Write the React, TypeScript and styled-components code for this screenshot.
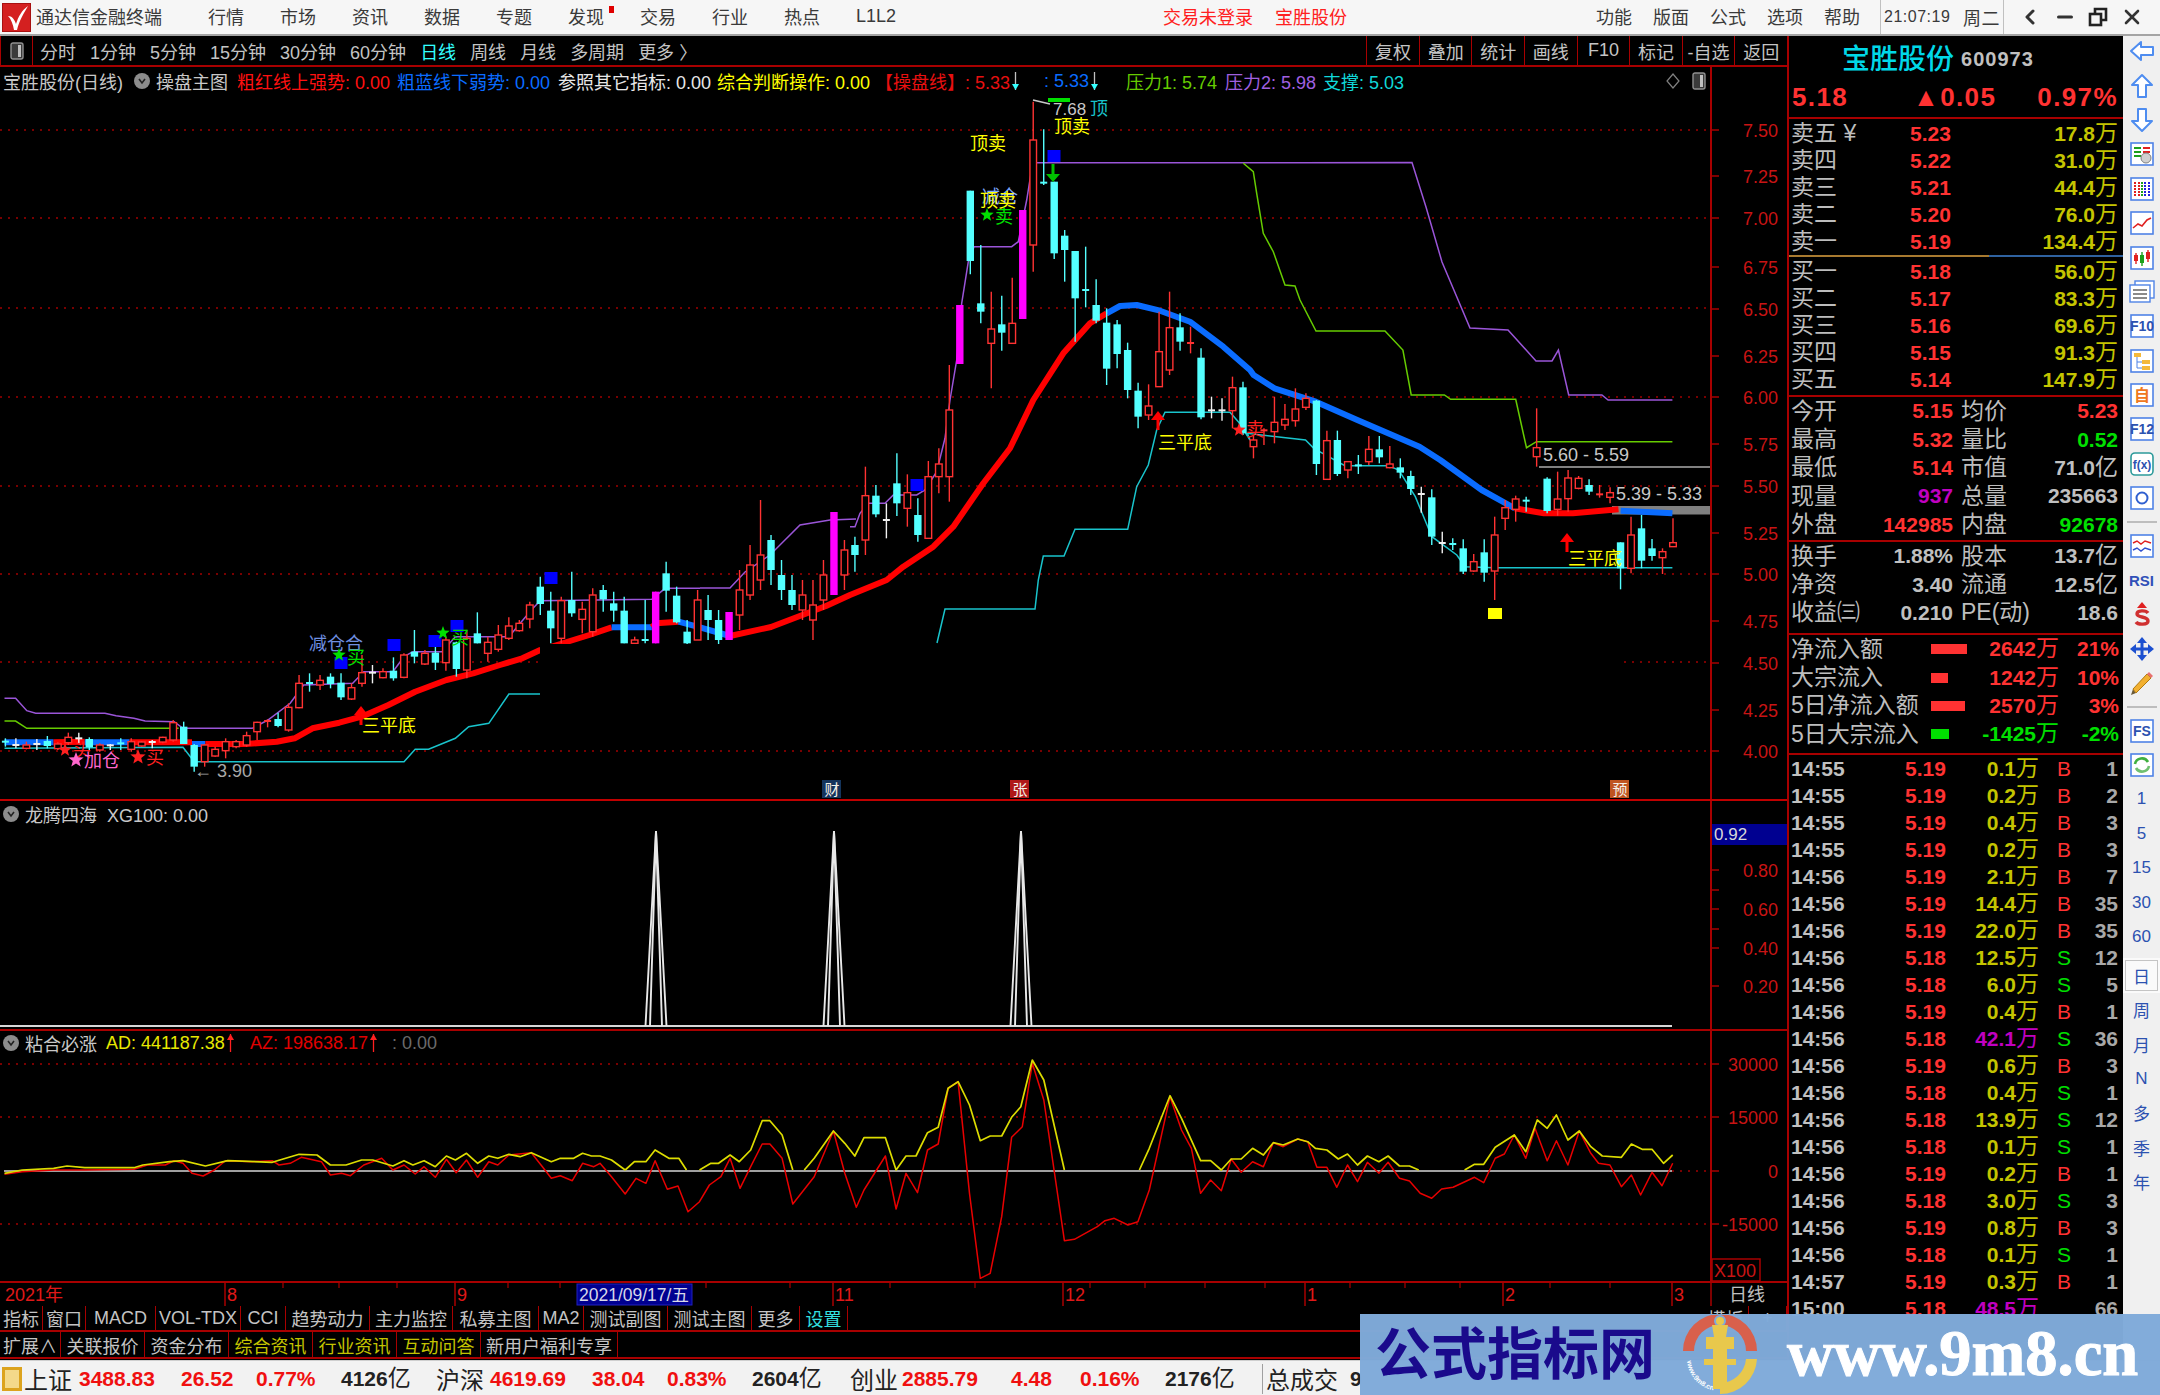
import React from 'react';
import styled, { createGlobalStyle } from 'styled-components';
import { ChevronLeft, Minus, X } from 'lucide-react';

const GlobalStyle = createGlobalStyle`
  html, body { margin: 0; padding: 0; background: #000; overflow: hidden; }
  body { font-family: "Liberation Sans", "Noto Sans CJK SC", sans-serif; }
  #root { width: 2160px; height: 1395px; }
`;

const RED_LINE = '#a80000';

const Page = styled.div`
  position: relative;
  width: 2160px;
  height: 1395px;
  display: flex;
  flex-direction: column;
  overflow: hidden;
  background: #000;
`;

/* ---------- title bar ---------- */
const TitleBar = styled.header`
  height: 34px;
  flex: none;
  display: flex;
  align-items: center;
  background: #f6f6f6;
  border-bottom: 2px solid #a4a4a4;
  color: #3a3a3a;
  font-size: 18px;
`;
const AppName = styled.span`margin-left: 5px; width: 126px; white-space: nowrap; padding-bottom: 2px;`;
const MenuGroup = styled.nav<{ $ml: number; $gap: number }>`
  display: flex;
  align-items: center;
  gap: ${p => p.$gap}px;
  margin-left: ${p => p.$ml}px;
  padding-bottom: 2px;
`;
const MenuItem = styled.span<{ $c?: string; $dot?: boolean }>`
  position: relative;
  color: ${p => p.$c || '#3a3a3a'};
  white-space: nowrap;
  ${p => p.$dot ? `&::after{content:"";position:absolute;right:-10px;top:3px;width:5px;height:7px;background:#e00000;}` : ''}
`;
const Clock = styled.div`
  margin-left: 20px;
  width: 124px;
  height: 34px;
  display: flex;
  align-items: center;
  justify-content: space-between;
  padding: 0 3px;
  box-sizing: border-box;
  border-left: 1px solid #c0c0c0;
  border-right: 1px solid #c0c0c0;
  font-size: 16px;
  letter-spacing: 0.5px;
`;
const WinButtons = styled.div`
  margin-left: 14px;
  display: flex;
  align-items: center;
  gap: 12px;
  color: #333;
`;

/* ---------- body ---------- */
const Body = styled.div`
  flex: none;
  height: 1324px;
  display: flex;
`;
const ChartColumn = styled.main`
  width: 1787px;
  flex: none;
  display: flex;
  flex-direction: column;
`;
const Toolbar = styled.div`
  height: 29px;
  flex: none;
  display: flex;
  align-items: stretch;
  justify-content: space-between;
  border-bottom: 2px solid ${RED_LINE};
  color: #c4c4c4;
  font-size: 18px;
`;
const Toggle = styled.div`
  width: 33px;
  display: flex;
  align-items: center;
  justify-content: center;
  border-right: 1px solid ${RED_LINE};
  border-left: 1px solid ${RED_LINE};
  box-sizing: border-box;
`;
const PeriodGroup = styled.div`
  display: flex;
  align-items: center;
  gap: 14px;
  margin-left: 7px;
  flex: 1;
`;
const Period = styled.span<{ $on?: boolean }>`
  color: ${p => p.$on ? '#33ffff' : '#c4c4c4'};
  white-space: nowrap;
`;
const ToolButton = styled.span`
  width: 52.6px;
  display: flex;
  align-items: center;
  justify-content: center;
  border-left: 1px solid ${RED_LINE};
  box-sizing: border-box;
  white-space: nowrap;
`;
const Pane = styled.section<{ $h: number }>`
  position: relative;
  height: ${p => p.$h}px;
  flex: none;
`;
const ChartSvg = styled.svg`
  display: block;
  position: absolute;
  left: 0;
  top: 0;
`;
const Legend = styled.div<{ $top: number }>`
  position: absolute;
  z-index: 2;
  left: 3px;
  top: ${p => p.$top}px;
  width: 1703px;
  height: 24px;
  display: flex;
  align-items: center;
  font-size: 18px;
  color: #c8c8c8;
  white-space: nowrap;
`;
const LegendItem = styled.span<{ $c?: string; $w?: number; $ml?: number }>`
  color: ${p => p.$c || '#c8c8c8'};
  ${p => p.$w ? `width:${p.$w}px;flex:none;` : ''}
  ${p => p.$ml ? `margin-left:${p.$ml}px;` : ''}
  display: inline-flex;
  align-items: center;
`;
const RoundMark = styled.span`
  width: 16px;
  height: 16px;
  margin-right: 6px;
  border-radius: 50%;
  background: #8c8c8c;
  flex: none;
  display: inline-flex;
  align-items: center;
  justify-content: center;
`;
const LegendTail = styled.span`
  margin-left: auto;
  display: inline-flex;
  align-items: center;
  gap: 12px;
`;
const AxisBar = styled.div`
  height: 23px;
  flex: none;
  position: relative;
`;
const TabRow = styled.div<{ $h: number }>`
  height: ${p => p.$h}px;
  flex: none;
  display: flex;
  border-bottom: 2px solid ${RED_LINE};
  box-sizing: border-box;
  font-size: 18px;
`;
const Tab = styled.span<{ $w: number; $c?: string }>`
  width: ${p => p.$w}px;
  flex: none;
  display: flex;
  align-items: center;
  justify-content: center;
  border-right: 1.5px solid ${RED_LINE};
  box-sizing: border-box;
  white-space: nowrap;
  overflow: hidden;
  color: ${p => p.$c || '#c4c4c4'};
`;
const TabSpacer = styled.span`flex: 1;`;

/* ---------- quote panel ---------- */
const QuotePanel = styled.aside`
  width: 336px;
  flex: none;
  box-sizing: border-box;
  border-left: 2px solid ${RED_LINE};
  display: flex;
  flex-direction: column;
  color: #c0c0c0;
  overflow: hidden;
`;
const Section = styled.div<{ $h: number; $rule?: boolean; $pt?: number }>`
  height: ${p => p.$h}px;
  flex: none;
  box-sizing: border-box;
  overflow: hidden;
  ${p => p.$pt ? `padding-top:${p.$pt}px;` : ''}
  ${p => p.$rule ? `border-bottom: 2px solid ${RED_LINE};` : ''}
`;
const NameRow = styled.div`
  height: 42px;
  padding-left: 53px;
  display: flex;
  align-items: center;
  gap: 7px;
`;
const StockName = styled.span`
  color: #00d8e8;
  font-size: 28px;
  font-weight: 500;
  white-space: nowrap;
`;
const StockCode = styled.span`
  color: #c0c0c0;
  font-size: 20px;
  font-weight: 700;
  letter-spacing: 1px;
  margin-top: 4px;
`;
const PriceRow = styled.div`
  height: 39px;
  display: grid;
  grid-template-columns: 121px 123px 1fr;
  padding: 0 5px 0 3px;
  align-items: center;
  font-weight: 700;
  font-size: 26px;
  letter-spacing: 1.4px;
  color: #ff3232;
`;
const RightText = styled.span`text-align: right;`;
const OrderRowBox = styled.div`
  height: 27.1px;
  display: grid;
  grid-template-columns: 119px 60px 1fr;
  padding: 0 5px 0 2px;
  align-items: center;
`;
const Label = styled.span`
  font-size: 23px;
  color: #bdbdbd;
  white-space: nowrap;
  line-height: 1;
  letter-spacing: 0;
`;
const Num = styled.span<{ $c?: string; $right?: boolean }>`
  font-size: 21px;
  font-weight: 700;
  color: ${p => p.$c || '#ff3232'};
  white-space: nowrap;
  ${p => p.$right ? 'text-align:right;' : ''}
`;
const Unit = styled.span`
  font-size: 23px;
  font-weight: 400;
  line-height: 1;
`;
const SplitRule = styled.div`
  height: 2px;
  flex: none;
  margin: 0 0 1px;
  background: linear-gradient(to right, #a87a30 0 200px, #2f62a0 200px);
`;
const StatRow = styled.div`
  height: 28.4px;
  display: grid;
  grid-template-columns: 2px 162px 8px 47px 1fr;
  padding-right: 5px;
  align-items: center;
`;
const FlowRow = styled.div`
  height: 28.4px;
  position: relative;
  display: grid;
  grid-template-columns: 140px 128px 1fr;
  padding: 0 4px 0 2px;
  align-items: center;
`;
const FlowBarCell = styled.span`
  display: flex;
  align-items: center;
`;
const FlowBar = styled.i<{ $c: string; $w: number }>`
  display: block;
  height: 10px;
  width: ${p => p.$w}px;
  background: ${p => p.$c};
`;
const TickRow = styled.div`
  height: 27px;
  display: grid;
  grid-template-columns: 114px 41px 93px 18px 1fr;
  padding: 0 5px 0 2px;
  align-items: center;
`;
const TickSide = styled.span<{ $c: string }>`
  padding-left: 18px;
  font-size: 21px;
  color: ${p => p.$c};
  grid-column: 4;
  white-space: nowrap;
`;

/* ---------- side rail ---------- */
const Rail = styled.aside`
  flex: 1;
  background: #f0f0f0;
  display: flex;
  flex-direction: column;
  align-items: center;
  overflow: hidden;
`;
const RailButton = styled.div<{ $on?: boolean }>`
  height: 34.4px;
  flex: none;
  width: 100%;
  display: flex;
  align-items: center;
  justify-content: center;
  box-sizing: border-box;
  color: #2c52b0;
  font-size: 17px;
  &:first-child { margin-top: -2px; }
  ${p => p.$on ? 'background:#fafafa;outline:1px solid #c4c4c4;outline-offset:-3px;' : ''}
`;
const RailRule = styled.div`
  height: 2px;
  width: 30px;
  flex: none;
  margin: 5.5px 0;
  background: #bdbdbd;
`;
const RailGap = styled.div`height: 4px; flex: none;`;

/* ---------- status bar ---------- */
const StatusBar = styled.footer`
  flex: 1;
  display: flex;
  align-items: center;
  background: #f2f2f2;
  border-top: 1px solid #cfcfcf;
  color: #222;
  white-space: nowrap;
`;
const StatusCell = styled.span<{ $w: number; $c?: string; $big?: boolean; $bold?: boolean }>`
  width: ${p => p.$w}px;
  flex: none;
  color: ${p => p.$c || '#222'};
  font-size: ${p => p.$big ? 24 : 21}px;
  font-weight: ${p => p.$bold ? 700 : 400};
  white-space: nowrap;
`;
const StatusLogo = styled.span`
  width: 20px;
  height: 24px;
  margin: 0 2px 0 2px;
  flex: none;
  box-sizing: border-box;
  border: 3px solid #dca31e;
  background: #f4d98a;
`;
const StatusSplit = styled.span`
  width: 1px;
  height: 30px;
  background: #a0a0a0;
  margin: 0 3px 0 0;
  flex: none;
`;

/* ---------- watermark ---------- */
const Watermark = styled.aside`
  position: absolute;
  right: 0;
  bottom: 0;
  width: 800px;
  height: 81px;
  display: flex;
  align-items: center;
  background: rgba(127, 170, 217, 0.98);
  z-index: 5;
`;
const WmTitle = styled.span`
  margin-left: 15px;
  width: 285px;
  color: #1a0a8c;
  font-size: 56px;
  font-weight: 700;
  white-space: nowrap;
  line-height: 1;
`;
const WmSite = styled.span`
  margin-left: 27px;
  color: #fff;
  font-family: "Liberation Serif", serif;
  font-weight: 700;
  font-size: 64.5px;
  line-height: 1;
  white-space: nowrap;
  -webkit-text-stroke: 1px #fff;
`;

/* ---------- svg text ---------- */
const Mark = styled.text<{ $c: string; $s?: number; $bold?: boolean }>`
  fill: ${p => p.$c};
  font-size: ${p => p.$s || 18}px;
  font-weight: ${p => p.$bold ? 700 : 400};
`;

/* ---------- chart data helpers ---------- */
type Conv = [number, number, number];
const Z8: Conv = [0, 2.24, 540];
const Z7: Conv = [850, 3, 80];
const Z9: Conv = [1150, 2.412, 350];
const Z12: Conv = [0, 2.24, 1030];
const Z10: Conv = [600, 1.307, 1030];
const pts = (a: number[], c: Conv) => {
  const out: string[] = [];
  for (let i = 0; i < a.length; i += 2) out.push(`${(c[0] + a[i] / c[1]).toFixed(1)},${(c[2] + a[i + 1] / 3).toFixed(1)}`);
  return out.join(' ');
};
const join = (...p: string[]) => p.join(' ');

type C = [string, number, number, number, number];
const S8: C[] = [
  ['c',595,605,610,620],['w',595,615,616,625],['r',605,615,625,628],['w',597,612,613,630],['c',588,603,618,625],['r',607,612,626,630],['r',578,592,608,615],['w',578,595,596,610],['c',592,597,622,630],['r',610,615,630,635],['w',612,616,617,630],['c',595,610,611,630],['r',595,605,628,635],['r',603,606,618,620],['w',600,606,607,625],['r',590,592,606,610],['r',540,548,600,605],['c',545,560,612,612],['c',612,615,680,695],['r',612,615,665,680],['r',620,628,648,650],['r',595,605,632,655],['r',600,605,620,625],['r',575,587,615,620],['r',545,547,575,600],['r',538,543,548,562],['c',518,537,558,562],['r',490,502,570,575],['r',405,430,503,505],['c',400,429,435,455],['r',405,421,435,450],['c',400,410,432,445],['c',400,428,472,480],['r',430,443,477,480],['r',345,398,430,440],['w',375,398,399,430],['r',385,395,413,415],['c',352,392,415,422],['r',340,345,412,415],['c',270,335,350,370],['r',330,340,372,375],['c',305,338,368,390],['r',290,300,368,392],['c',305,307,387,410],['r',270,295,390,415],['c',217,280,310,310],['r',290,307,340,365],['r',255,285,328,335],['r',232,258,295,300],['r',240,250,272,275],['r',185,195,237,265],['c',110,140,192,225],['c',155,212,265,310],['r',170,182,295,310],['c',95,180,220,230],['r',185,208,238,280],['r',145,165,275,290],['c',135,150,178,215],['c',155,190,212,245],['c',170,212,310,310],['r',290,300,310,310],['c',180,300,301,310],['m',155,155,310,310],['c',65,100,152,215],['c',140,167,247,250],['c',240,275,310,320],
];
const S2: C[] = [
  ['r',590,600,640,640],['c',595,610,620,640],['c',610,620,640,645],['m',612,612,640,640],['r',570,590,615,630],['r',545,565,595,600],['r',500,555,580,590],['c',535,540,570,585],['c',560,575,590,600],['c',575,590,605,610],['r',580,595,610,620],['r',580,605,620,640],['r',560,575,600,610],['m',512,512,595,595],['r',540,550,575,590],
];
const S7: C[] = [
  ['c',1370,1395,1425,1475],['r',1160,1247,1380,1425],['c',1215,1247,1303,1312],['w',1270,1320,1321,1375],['c',1120,1210,1270,1308],['r',1183,1238,1285,1340],['c',1255,1305,1365,1385],['r',1143,1190,1375,1375],['r',1105,1152,1190,1240],['r',855,990,1190,1265],['m',675,675,852,852],['c',332,332,543,583],['c',495,670,695,730],['r',635,747,790,925],['c',647,733,758,812],['r',593,730,790,790],['m',390,390,717,717],['r',65,180,495,575],['c',148,308,313,315],['c',305,305,520,537],['c',450,467,510,605],['c',513,513,655,785],['c',500,630,634,682],['c',598,675,722,730],['c',685,728,866,915],['c',720,733,822,865],['c',788,810,930,955],['c',908,932,1010,1045],['r',913,978,1005,1020],['r',695,815,920,920],['r',635,743,870,885],['c',700,742,785,812],['r',740,789,791,820],['c',805,833,1012,1018],['w',950,991,993,1015],['w',955,991,993,1022],['r',890,923,992,1045],['c',905,922,1060,1065],['r',1065,1080,1100,1135],['r',1045,1051,1053,1095],['r',950,1027,1055,1090],['r',972,1018,1035,1050],['r',925,987,1022,1040],
];
const S9: C[] = [
  ['r',130,145,172,180],['c',150,152,342,375],['r',242,272,388,388],['c',242,270,372,378],['r',335,335,360,385],['c',315,346,348,372],['r',258,298,335,345],['c',258,298,322,340],['r',288,342,353,355],['c',325,352,368,385],['c',362,378,417,435],['w',410,432,434,488],['c',418,442,560,585],['w',545,579,581,610],['c',565,582,584,600],['c',568,595,665,672],['r',612,635,663,665],['c',568,607,668,695],['r',500,555,663,750],['r',450,473,505,540],['r',437,447,478,515],['c',440,452,454,485],['r',175,293,320,350],['c',382,386,483,490],['r',365,447,478,497],['r',360,384,446,485],['r',378,385,415,418],['c',388,405,425,435],['r',405,433,441,443],['r',412,428,442,460],['c',577,577,655,718],['r',500,555,655,670],['c',495,535,632,655],['c',567,595,618,632],['r',595,605,623,672],['r',505,578,590,590],
];
const toY = (rows: C[], f: (z: number) => number): C[] => rows.map(r => [r[0], f(r[1]), f(r[2]), f(r[3]), f(r[4])]);
const CANDLES: C[] = [
  ...toY(S8, z => 540 + z / 3),
  ...S2,
  ...toY(S7, z => 80 + z / 3),
  ...toY(S9, z => 350 + z / 3),
];
const CC: Record<string, string> = { r: '#ff3232', c: '#54ffff', w: '#f0f0f0', m: '#ff00ff' };

const Candles = () => (
  <g>
    {CANDLES.map((d, i) => {
      const x = 5.4 + 10.488 * i;
      const col = CC[d[0]];
      const flat = d[3] - d[2] < 3;
      return (
        <g key={i}>
          <line x1={x} x2={x} y1={d[1]} y2={d[4]} stroke={col} strokeWidth={1.4} />
          {flat ? (
            <line x1={x - 3.5} x2={x + 3.5} y1={d[2]} y2={d[2]} stroke={col} strokeWidth={2} />
          ) : d[0] === 'r' ? (
            <rect x={x - 3.3} y={d[2]} width={6.6} height={d[3] - d[2]} fill="#000" stroke={col} strokeWidth={1.4} />
          ) : (
            <rect x={x - 3.7} y={d[2]} width={7.4} height={d[3] - d[2]} fill={col} />
          )}
        </g>
      );
    })}
  </g>
);

const PURPLE_LEFT = pts([10,475,35,475,60,512,80,520,235,520,260,527,300,535,325,543,390,545,410,565,565,565,600,540,650,490,680,435,790,430,815,395,880,395,905,350,925,335,990,335,1020,290,1140,290,1190,210,1210,182,1460,178,1490,145,1568,145], Z8);
const PURPLE_MID = '700,588 730,588 745,572 770,555 800,525 830,520 856,519';
const PURPLE_RIGHT = join(
  pts([0,1340,15,1340,30,1300,55,1270,105,1270,130,1245,200,1245,225,1230,260,1175,285,1075,300,960,320,840,335,670,355,545,372,500,485,500,505,485,530,360,548,248,1350,248], Z7),
  '1412,162.5 1426,207 1442,262 1470,328 1508,330 1536,361 1552,361',
  pts([985,0,1010,135,1090,135,1105,150,1260,150], Z9)
);
const GREEN_LEFT = pts([10,543,35,543,60,565,400,565], Z8);
const GREEN_RIGHT = join(
  pts([1180,250,1210,275,1220,340,1240,460,1270,515,1305,615,1335,618,1350,660], Z7),
  '1316,331 1385,331',
  pts([610,0,630,135,710,135,725,148,882,148,908,293,932,275,1260,275], Z9)
);
const CYAN_LEFT = pts([10,625,410,622,435,665,905,665,930,628,960,628,1020,595,1050,560,1095,550,1140,462,1210,462], Z8);
const CYAN_RIGHT = join(
  '937,643 945,609 1035,609',
  pts([565,1500,580,1428,642,1428,675,1348,833,1348,860,1220,895,1155,920,1050,945,997,1140,997,1165,1025,1200,1080], Z7),
  pts([235,250,375,270,395,295,470,347,575,347,600,360,640,440,680,560,740,615,760,650,830,653,1260,653], Z9)
);

const THICK: [string, string][] = [
  ['#0a6cff', pts([10,607,120,607], Z8)],
  ['#ff0000', pts([120,607,190,605], Z8)],
  ['#0a6cff', pts([190,607,290,607], Z8)],
  ['#ff0000', pts([290,607,430,607], Z8)],
  ['#0a6cff', pts([430,612,460,612], Z8)],
  ['#ff0000', pts([460,612,550,612,620,605,660,595,700,565,760,548,810,530,870,495,930,455,1000,420,1060,400,1120,375,1170,355,1210,330,1255,312,1320,285,1370,262], Z8)],
  ['#0a6cff', pts([1370,262,1460,262], Z8)],
  ['#ff0000', pts([1460,262,1470,250,1520,245], Z8)],
  ['#0a6cff', join(pts([1520,245,1568,262], Z8), '730,636')],
  ['#ff0000', join('730,636 771,627 826,606 850,595', pts([110,1500,160,1460,250,1400,310,1340,400,1210,480,1105,550,960,640,820,720,730,770,700], Z7))],
  ['#0a6cff', join(pts([770,700,810,678,860,675,930,692,1020,725,1120,800,1200,870], Z7), pts([250,75,300,115,400,155,500,210,650,290,700,330,800,420,880,475], Z9))],
  ['#ff0000', pts([880,475,950,490,1020,490,1130,478], Z9)],
  ['#0a6cff', pts([1135,482,1260,490], Z9)],
];

const Y12 = pts([10,430,50,420,120,415,150,408,190,413,300,413,320,405,380,395,410,392,460,408,510,392,610,397,670,373,710,375,740,405,775,405,810,390,835,390,880,408,905,392,925,405,950,392,975,410,1000,378,1020,390,1045,370,1070,400,1095,378,1115,385,1140,373,1165,380,1190,368,1235,395,1255,385,1285,385,1305,370,1325,378], Z12);
const YELLOW = [
  join(Y12, pts([0,378,15,390,33,420], Z10)),
  pts([33,420,45,395,60,395,72,360,90,385,103,385,113,420], Z10),
  pts([130,420,145,400,155,400,170,375,182,395,197,360,212,272,222,272,238,315,252,420], Z10),
  pts([267,420,280,385,305,303,320,340,333,378,345,323,373,323,387,420,400,378,413,378,428,308,442,292,455,175,468,155,483,225,497,332,510,318,525,318,538,262,550,230,565,90,580,150,607,420], Z10),
  pts([705,420,718,355,745,197,760,265,785,392,798,392,812,420,825,387,838,387,853,355,867,375,880,338,893,345,912,327,925,335,935,355,950,360,965,387,977,372,990,405,1003,378,1018,395,1030,378,1045,408,1058,408,1070,420], Z10),
  pts([1130,420,1143,403,1155,403,1170,352,1195,315,1210,365,1225,270,1238,295,1250,255,1265,330,1280,303,1295,350,1310,378,1335,382,1348,342,1362,358,1375,358,1390,400,1402,375], Z10),
];
const REDSUB = join(
  pts([10,433,50,425,120,420,190,420,300,418,330,405,370,405,390,392,410,400,430,430,455,438,480,420,505,392,565,395,610,392,625,405,650,400,675,382,720,395,740,435,765,430,785,437,815,405,855,385,880,420,905,405,930,432,950,410,975,442,1000,388,1022,428,1045,390,1070,442,1095,395,1115,405,1140,375,1190,368,1215,410,1235,445,1255,437,1282,452,1305,400,1330,410], Z12),
  pts([0,400,15,440,33,492,47,445,60,460,72,392,88,478,102,468,115,545,130,515,143,465,158,440,170,385,183,475,197,410,212,342,222,342,238,385,252,522,280,440,305,303,320,430,335,532,345,480,373,378,387,537,400,430,415,488,428,360,442,342,455,175,468,155,483,490,497,745,510,730,525,560,538,322,552,290,565,100,580,210,607,632,620,628,650,590,660,572,672,565,690,585,703,575,718,480,745,200,760,300,773,355,785,490,798,450,812,482,825,387,838,427,853,395,867,410,880,338,893,350,912,327,925,335,937,412,950,412,963,472,977,405,990,455,1003,397,1018,430,1030,397,1045,445,1058,453,1072,490,1087,505,1100,477,1115,472,1143,442,1155,458,1170,385,1182,372,1195,315,1210,385,1222,295,1238,392,1250,332,1265,405,1280,303,1295,370,1305,400,1320,405,1335,470,1348,435,1360,495,1375,427,1388,467,1402,400], Z10)
);

const Dots = ({ y, x1 = 0, x2 = 1711 }: { y: number; x1?: number; x2?: number }) => (
  <line x1={x1} x2={x2} y1={y} y2={y} stroke="#a00000" strokeWidth={1.5} strokeDasharray="2 6" />
);
const AxisLabel = ({ y, t }: { y: number; t: string }) => (
  <Mark $c="#c81414" $s={18} x={1778} y={y + 6.5} textAnchor="end">{t}</Mark>
);
const Star = ({ x, y, c, r = 7 }: { x: number; y: number; c: string; r?: number }) => {
  const p: string[] = [];
  for (let i = 0; i < 10; i++) {
    const a = -Math.PI / 2 + (i * Math.PI) / 5;
    const q = i % 2 ? r * 0.42 : r;
    p.push(`${(x + q * Math.cos(a)).toFixed(1)},${(y + q * Math.sin(a)).toFixed(1)}`);
  }
  return <polygon points={p.join(' ')} fill={c} />;
};
const UpArrow = ({ x, y }: { x: number; y: number }) => (
  <g fill="#ff0000">
    <polygon points={`${x},${y} ${x - 7},${y + 9} ${x + 7},${y + 9}`} />
    <rect x={x - 1.5} y={y + 9} width={3} height={10} />
  </g>
);
const Square = ({ x, y }: { x: number; y: number }) => <rect x={x - 6.5} y={y - 6} width={13} height={12} fill="#0000ff" />;
const Badge = ({ x, bg, t }: { x: number; bg: string; t: string }) => (
  <g>
    <rect x={x - 10} y={780} width={19} height={18} fill={bg} />
    <Mark $c="#f4f0e8" $s={15} x={x} y={795} textAnchor="middle">{t}</Mark>
  </g>
);

const MainChart = () => (
  <ChartSvg width={1787} height={734} viewBox="0 67 1787 734">
    {[130, 218, 308, 397, 486, 574, 751].map(y => <Dots key={y} y={y} />)}
    <Dots y={662} />
    <line x1={1711} x2={1711} y1={67} y2={800} stroke={RED_LINE} strokeWidth={2} />
    {[['7.50',130],['7.25',176],['7.00',218],['6.75',267],['6.50',309],['6.25',356],['6.00',397],['5.75',444],['5.50',486],['5.25',533],['5.00',574],['4.75',621],['4.50',663],['4.25',710],['4.00',751]].map(([t, y]) => (
      <g key={t as string}>
        <line x1={1711} x2={1719} y1={y as number} y2={y as number} stroke={RED_LINE} strokeWidth={1.5} />
        <AxisLabel y={y as number} t={t as string} />
      </g>
    ))}
    <g fill="none" strokeWidth={1.5}>
      <polyline points={PURPLE_LEFT} stroke="#9a55d8" />
      <polyline points={PURPLE_MID} stroke="#9a55d8" />
      <polyline points={PURPLE_RIGHT} stroke="#9a55d8" />
      <polyline points={GREEN_LEFT} stroke="#66cc00" />
      <polyline points={GREEN_RIGHT} stroke="#66cc00" />
      <polyline points={CYAN_LEFT} stroke="#19c4cc" />
      <polyline points={CYAN_RIGHT} stroke="#19c4cc" />
    </g>
    <rect x={1612} y={506} width={98} height={8.5} fill="#808080" />
    <line x1={1539} x2={1710} y1={467} y2={467} stroke="#808080" strokeWidth={2} />
    <g fill="none" strokeWidth={6} strokeLinejoin="round">
      {THICK.map(([c, p], i) => <polyline key={i} points={p} stroke={c} />)}
    </g>
    <Candles />
    <rect x={540} y={644} width={1080} height={16} fill="#000" />
    <rect x={540} y={661} width={1080} height={36} fill="#000" />
    {/* squares */}
    <Square x={551} y={578} /><Square x={457} y={626} /><Square x={435} y={641} /><Square x={394} y={645} /><Square x={341} y={663} />
    <Square x={917} y={485} /><Square x={1054} y={156} />
    <rect x={1488} y={608} width={14} height={11} fill="#ffff00" />
    {/* arrows */}
    <g fill="#00c000">
      <rect x={1051.5} y={164} width={3} height={10} />
      <polygon points="1046,174 1060,174 1053,182" />
    </g>
    <UpArrow x={1158} y={411} /><UpArrow x={1567} y={533} /><UpArrow x={361} y={706} />
    {/* text marks */}
    <Mark $c="#ffff00" x={970} y={150}>顶卖</Mark>
    <Mark $c="#ffff00" x={1054} y={133}>顶卖</Mark>
    <Mark $c="#7ea8ff" x={982} y={203}>减仓</Mark>
    <Mark $c="#ffff00" x={980} y={207}>顶卖</Mark>
    <Star x={987} y={215} c="#00e000" />
    <Mark $c="#00e000" x={995} y={223}>卖</Mark>
    <Mark $c="#c8c8c8" $s={17} x={1053} y={115}>7.68</Mark>
    <Mark $c="#19c4cc" x={1090} y={115}>顶</Mark>
    <polyline points="1033,100 1050,104" stroke="#c8c8c8" strokeWidth={1.5} fill="none" />
    <rect x={1048} y={98} width={22} height={4} fill="#00e000" />
    <Mark $c="#ffff00" $s={18} x={1158} y={449}>三平底</Mark>
    <Mark $c="#ffff00" $s={18} x={362} y={732}>三平底</Mark>
    <Mark $c="#ffff00" $s={18} x={1568} y={565}>三平底</Mark>
    <Star x={1239} y={430} c="#ff2020" />
    <Mark $c="#ff2020" x={1246} y={436}>卖</Mark>
    <Mark $c="#c8c8c8" $s={18} x={1543} y={461}>5.60 - 5.59</Mark>
    <Mark $c="#c8c8c8" $s={18} x={1616} y={500}>5.39 - 5.33</Mark>
    <Mark $c="#a8a8a8" $s={18} x={194} y={777}>← 3.90</Mark>
    <Star x={65} y={750} c="#ff2020" />
    <Mark $c="#ff2020" x={73} y={757}>头</Mark>
    <Star x={76} y={760} c="#ff66cc" r={8} />
    <Mark $c="#ff66cc" $s={18} x={84} y={767}>加仓</Mark>
    <Star x={138} y={757} c="#ff2020" r={8} />
    <Mark $c="#ff2020" $s={18} x={146} y={764}>买</Mark>
    <Mark $c="#6f8fe0" $s={18} x={309} y={650}>减仓合</Mark>
    <Star x={339} y={655} c="#00e000" />
    <Mark $c="#00e000" x={347} y={664}>买</Mark>
    <Star x={443} y={633} c="#00e000" />
    <Mark $c="#00e000" x={451} y={644}>买</Mark>
    <Badge x={832} bg="#14345c" t="财" />
    <Badge x={1020} bg="#b01818" t="张" />
    <Badge x={1620} bg="#c05420" t="预" />
    <line x1={0} x2={1787} y1={800} y2={800} stroke="#c00000" strokeWidth={2} />
  </ChartSvg>
);

const SubChartOne = () => (
  <ChartSvg width={1787} height={230} viewBox="0 801 1787 230">
    <line x1={1711} x2={1711} y1={801} y2={1031} stroke={RED_LINE} strokeWidth={2} />
    <rect x={1712} y={824} width={75} height={21} fill="#000090" />
    <Mark $c="#d8d8d8" $s={17} x={1714} y={840}>0.92</Mark>
    {[['0.80',870],['0.60',909],['0.40',948],['0.20',986]].map(([t, y]) => (
      <g key={t as string}>
        <line x1={1711} x2={1719} y1={y as number} y2={y as number} stroke={RED_LINE} strokeWidth={1.5} />
        <AxisLabel y={y as number} t={t as string} />
      </g>
    ))}
    <line x1={1711} x2={1719} y1={890} y2={890} stroke={RED_LINE} strokeWidth={1.5} />
    <line x1={1711} x2={1719} y1={929} y2={929} stroke={RED_LINE} strokeWidth={1.5} />
    <line x1={0} x2={1672} y1={1026} y2={1026} stroke="#d8d8d8" strokeWidth={2} />
    {[656, 834, 1021].map(x => (
      <g key={x} fill="none" stroke="#e8e8e8" strokeWidth={1.9}>
        <polyline points={`${x - 10.5},1026 ${x},831 ${x + 10.5},1026`} />
        <polyline points={`${x - 6},1026 ${x},831 ${x + 6},1026`} />
      </g>
    ))}
    <line x1={0} x2={1787} y1={1030} y2={1030} stroke={RED_LINE} strokeWidth={2} />
  </ChartSvg>
);

const SubChartTwo = () => (
  <ChartSvg width={1787} height={252} viewBox="0 1031 1787 252">
    {[1064, 1117, 1224].map(y => <Dots key={y} y={y} />)}
    <Dots y={1171} x1={1672} />
    <line x1={1711} x2={1711} y1={1031} y2={1283} stroke={RED_LINE} strokeWidth={2} />
    {[['30000',1064],['15000',1117],['0',1171],['-15000',1224]].map(([t, y]) => (
      <g key={t as string}>
        <line x1={1711} x2={1719} y1={y as number} y2={y as number} stroke={RED_LINE} strokeWidth={1.5} />
        <AxisLabel y={y as number} t={t as string} />
      </g>
    ))}
    <rect x={1712} y={1259} width={48} height={22} fill="none" stroke={RED_LINE} strokeWidth={1.5} />
    <Mark $c="#c81414" $s={18} x={1714} y={1277}>X100</Mark>
    <line x1={4} x2={1672} y1={1171} y2={1171} stroke="#a0a0a0" strokeWidth={2} />
    <g fill="none" strokeLinejoin="round">
      <polyline points={REDSUB} stroke="#e80000" strokeWidth={1.5} />
      {YELLOW.map((p, i) => <polyline key={i} points={p} stroke="#dcdc00" strokeWidth={1.7} />)}
    </g>
    <line x1={0} x2={1787} y1={1282} y2={1282} stroke={RED_LINE} strokeWidth={2} />
  </ChartSvg>
);

const TimeAxis = () => (
  <ChartSvg width={1787} height={23} viewBox="0 1283 1787 23">
    {[283, 339, 397, 508, 560, 706, 790, 890, 975, 1090, 1145, 1205, 1265, 1350, 1405, 1460, 1550, 1610].map(x => (
      <line key={x} x1={x} x2={x} y1={1283} y2={1288} stroke={RED_LINE} strokeWidth={1.2} />
    ))}
    {[225, 455, 833, 1063, 1305, 1503, 1672, 1711].map(x => (
      <line key={x} x1={x} x2={x} y1={1283} y2={1306} stroke={RED_LINE} strokeWidth={1.5} />
    ))}
    <Mark $c="#e01818" x={5} y={1301}>2021年</Mark>
    {[['8',227],['9',457],['11',835],['12',1065],['1',1307],['2',1505],['3',1674]].map(([t, x]) => (
      <Mark key={t as string} $c="#e01818" x={x as number} y={1301}>{t}</Mark>
    ))}
    <rect x={577} y={1284} width={115} height={21} fill="#000090" stroke="#2020c0" />
    <Mark $c="#d8d8e8" $s={17.5} x={579} y={1301}>2021/09/17/五</Mark>
    <Mark $c="#c0c0c0" x={1729} y={1301}>日线</Mark>
  </ChartSvg>
);

/* ---------- small icons ---------- */
const Chevron = () => (
  <svg width="10" height="10" viewBox="0 0 10 10"><polyline points="2,3 5,7 8,3" fill="none" stroke="#222" strokeWidth="1.6" /></svg>
);
const ToggleGlyph = ({ s = 14 }: { s?: number }) => (
  <svg width={s} height={s + 4} viewBox="0 0 14 18">
    <rect x="1" y="1" width="12" height="16" rx="2" fill="#3a3a3a" stroke="#909090" strokeWidth="1.4" />
    <rect x="8" y="3" width="3" height="12" fill="#c0c0c0" />
  </svg>
);
const LegendArrow = ({ c, down }: { c: string; down?: boolean }) => (
  <svg width="9" height="20" viewBox="0 0 9 20" style={{ marginLeft: 1 }}>
    <line x1="4.5" x2="4.5" y1="1" y2="19" stroke={down ? '#c0c0c0' : c} strokeWidth="1.3" />
    <polygon points={down ? '1,13 8,13 4.5,19' : '1,7 8,7 4.5,1'} fill={c} />
  </svg>
);
const Tile = ({ children }: { children: React.ReactNode }) => (
  <svg width="24" height="24" viewBox="0 0 24 24">
    <rect x="1" y="1" width="22" height="22" fill="#fff" stroke="#4f83e6" strokeWidth="1.6" />
    {children}
  </svg>
);
const Outline = ({ d }: { d: string }) => (
  <svg width="26" height="26" viewBox="0 0 26 26"><path d={d} fill="#fff" stroke="#4f8df0" strokeWidth="2" strokeLinejoin="round" /></svg>
);
const TileText = styled.text<{ $c?: string; $s?: number }>`
  fill: ${p => p.$c || '#2c52b0'};
  font-size: ${p => p.$s || 13}px;
  font-weight: 700;
`;
const RsiText = styled.span`
  color: #3050b8;
  font-size: 15px;
  font-weight: 700;
`;
const RAIL: (React.ReactNode | 'rule' | 'gap')[] = [
  <Outline key="l" d="M2 13 L12 4 V9 H24 V17 H12 V22 Z" />,
  <Outline key="u" d="M13 2 L23 12 H17 V24 H9 V12 H3 Z" />,
  <Outline key="d" d="M13 24 L23 14 H17 V2 H9 V14 H3 Z" />,
  <Tile key="q"><g strokeWidth="2"><path d="M4 6h7M4 10h7M4 14h7" stroke="#1ca01c" /><path d="M13 6h7M13 10h7" stroke="#e02020" /></g><circle cx="16" cy="16" r="5" fill="#d0d0d0" stroke="#808080" /></Tile>,
  <Tile key="t"><g strokeWidth="2" strokeDasharray="2 1"><path d="M5 5v14" stroke="#e02020" /><path d="M9 5v14" stroke="#e02020" /><path d="M12 5v14" stroke="#1ca01c" /><path d="M15 5v14" stroke="#2020e0" /><path d="M19 5v14" stroke="#2020e0" /></g></Tile>,
  <Tile key="li"><polyline points="3,17 8,13 12,15 17,9 21,7" fill="none" stroke="#e02020" strokeWidth="1.6" /></Tile>,
  <Tile key="k"><g strokeWidth="1.4"><path d="M6 7v11" stroke="#e02020" /><path d="M12 6v14" stroke="#1ca01c" /><path d="M18 4v12" stroke="#e02020" /></g><rect x="4" y="9" width="4" height="6" fill="#e02020" /><rect x="10" y="9" width="4" height="8" fill="#1ca01c" /><rect x="16" y="6" width="4" height="7" fill="#e02020" /></Tile>,
  <svg key="w" width="26" height="24" viewBox="0 0 26 24"><rect x="6" y="1" width="19" height="17" fill="#fff" stroke="#4f83e6" strokeWidth="1.4" /><rect x="1" y="5" width="20" height="17" fill="#fff" stroke="#4f83e6" strokeWidth="1.4" /><path d="M4 10h14M4 14h14M4 18h14" stroke="#8a8a8a" strokeWidth="2" /></svg>,
  <Tile key="f10"><TileText x="12" y="17" textAnchor="middle" $s={14}>F10</TileText></Tile>,
  <Tile key="tree"><rect x="4" y="4" width="7" height="4" fill="#f4b93a" /><rect x="12" y="11" width="8" height="4" fill="#f4b93a" /><rect x="12" y="17" width="8" height="4" fill="#f4b93a" /><path d="M7 8v11h5M7 13h5" stroke="#4f83e6" fill="none" /></Tile>,
  <Tile key="zi"><TileText x="12" y="18" textAnchor="middle" $c="#f07820" $s={16}>自</TileText></Tile>,
  <Tile key="f12"><TileText x="12" y="17" textAnchor="middle" $s={14}>F12</TileText></Tile>,
  <svg key="fx" width="24" height="24" viewBox="0 0 24 24"><rect x="1" y="1" width="22" height="22" rx="4" fill="#fff" stroke="#2c9a9a" strokeWidth="1.6" /><TileText x="12" y="17" textAnchor="middle" $s={12}>f(x)</TileText></svg>,
  <Tile key="o"><circle cx="12" cy="12" r="5.5" fill="none" stroke="#3060d0" strokeWidth="2" /></Tile>,
  'rule',
  <Tile key="wave"><polyline points="3,9 7,7 11,10 15,7 21,9" fill="none" stroke="#e02020" strokeWidth="1.4" /><polyline points="3,16 7,14 11,17 15,14 21,16" fill="none" stroke="#3050d0" strokeWidth="1.4" /></Tile>,
  <RsiText key="rsi">RSI</RsiText>,
  <svg key="s" width="24" height="26" viewBox="0 0 24 26"><polygon points="12,1 7,7 17,7" fill="#e02020" /><path d="M18 12 C16 9 7 9 7 13 C7 17 18 15 18 20 C18 24 8 24 6 21" fill="none" stroke="#d03030" strokeWidth="3.4" /></svg>,
  <svg key="mv" width="26" height="26" viewBox="0 0 26 26" fill="#1c50d0"><polygon points="13,1 8,7 18,7" /><polygon points="13,25 8,19 18,19" /><polygon points="1,13 7,8 7,18" /><polygon points="25,13 19,8 19,18" /><rect x="7" y="11.5" width="12" height="3" /><rect x="11.5" y="7" width="3" height="12" /></svg>,
  <svg key="pen" width="26" height="26" viewBox="0 0 26 26"><polygon points="4,19 7,23 2,25" fill="#6a5a3a" /><polygon points="4,19 18,4 22,8 7,23" fill="#f2b030" stroke="#b07a10" /><polygon points="18,4 20,2 24,6 22,8" fill="#e87070" /></svg>,
  'rule',
  <Tile key="fs"><TileText x="12" y="17" textAnchor="middle" $s={14}>FS</TileText></Tile>,
  <Tile key="re"><path d="M5 11 A7 7 0 0 1 18 9" fill="none" stroke="#40b040" strokeWidth="2.6" /><path d="M19 13 A7 7 0 0 1 6 15" fill="none" stroke="#70c070" strokeWidth="2.6" /></Tile>,
  '1', '5', '15', '30', '60', 'gap', '日', '周', '月', 'N', '多', '季', '年',
];

const ORDERS: [string, string, string][] = [
  ['卖五', '5.23', '17.8'], ['卖四', '5.22', '31.0'], ['卖三', '5.21', '44.4'], ['卖二', '5.20', '76.0'], ['卖一', '5.19', '134.4'],
];
const BUYS: [string, string, string][] = [
  ['买一', '5.18', '56.0'], ['买二', '5.17', '83.3'], ['买三', '5.16', '69.6'], ['买四', '5.15', '91.3'], ['买五', '5.14', '147.9'],
];
const YEL = '#c4c400';
const GRN = '#00e000';
const MAG = '#c000c0';
const STATS: [string, string, string, string, string, string?][] = [
  ['今开', '5.15', '#ff3232', '均价', '5.23', '#ff3232'],
  ['最高', '5.32', '#ff3232', '量比', '0.52', GRN],
  ['最低', '5.14', '#ff3232', '市值', '71.0亿', '#c0c0c0'],
  ['现量', '937', MAG, '总量', '235663', '#c0c0c0'],
  ['外盘', '142985', '#ff3232', '内盘', '92678', GRN],
];
const STATS2: [string, string, string, string][] = [
  ['换手', '1.88%', '股本', '13.7亿'],
  ['净资', '3.40', '流通', '12.5亿'],
  ['收益㈢', '0.210', 'PE(动)', '18.6'],
];
const FLOWS: [string, number, string, string, string][] = [
  ['净流入额', 36, '#ff3232', '2642', '21%'],
  ['大宗流入', 17, '#ff3232', '1242', '10%'],
  ['5日净流入额', 34, '#ff3232', '2570', '3%'],
  ['5日大宗流入', 18, GRN, '-1425', '-2%'],
];
const TICKS: [string, string, string, string, string][] = [
  ['14:55','5.19','0.1','B','1'],['14:55','5.19','0.2','B','2'],['14:55','5.19','0.4','B','3'],['14:55','5.19','0.2','B','3'],
  ['14:56','5.19','2.1','B','7'],['14:56','5.19','14.4','B','35'],['14:56','5.19','22.0','B','35'],['14:56','5.18','12.5','S','12'],
  ['14:56','5.18','6.0','S','5'],['14:56','5.19','0.4','B','1'],['14:56','5.18','42.1','S','36'],['14:56','5.19','0.6','B','3'],
  ['14:56','5.18','0.4','S','1'],['14:56','5.18','13.9','S','12'],['14:56','5.18','0.1','S','1'],['14:56','5.19','0.2','B','1'],
  ['14:56','5.18','3.0','S','3'],['14:56','5.19','0.8','B','3'],['14:56','5.18','0.1','S','1'],['14:57','5.19','0.3','B','1'],
  ['15:00','5.18','48.5','','66'],
];
const TAB1: [string, number, string?][] = [['指标',43],['窗口',43],['MACD',70],['VOL-TDX',85],['CCI',45],['趋势动力',84],['主力监控',83],['私募主图',86],['MA2',45],['测试副图',84],['测试主图',84],['更多',48],['设置',48,'#33e0e0']];
const TAB2: [string, number, string?][] = [['扩展∧',61],['关联报价',84],['资金分布',84],['综合资讯',84,YEL],['行业资讯',84,YEL],['互动问答',84,YEL],['新用户福利专享',137]];

const OrderRow = ({ r }: { r: [string, string, string] }) => (
  <OrderRowBox>
    <Label>{r[0]}{r[0] === '卖五' ? ' ¥' : ''}</Label>
    <Num>{r[1]}</Num>
    <Num $c={YEL} $right>{r[2]}<Unit>万</Unit></Num>
  </OrderRowBox>
);
const withUnit = (v: string) => v.endsWith('亿') ? <>{v.slice(0, -1)}<Unit>亿</Unit></> : v;

export default function App() {
  return (
    <Page>
      <GlobalStyle />
      <TitleBar>
        <svg width="29" height="29" viewBox="0 0 29 29" style={{ marginLeft: 2, flex: 'none' }}>
          <rect x="0.5" y="0.5" width="28" height="28" fill="#d42020" stroke="#a81010" />
          <path d="M6 13 C11 13 13 18 14 21 C16 14 20 7 26 3 C22 10 17 18 15 27 L12 27 C11 21 9 16 6 13 Z" fill="#fff" />
        </svg>
        <AppName>通达信金融终端</AppName>
        <MenuGroup $ml={46} $gap={36}>
          {['行情', '市场', '资讯', '数据', '专题'].map(t => <MenuItem key={t}>{t}</MenuItem>)}
          <MenuItem $dot>发现</MenuItem>
          {['交易', '行业', '热点'].map(t => <MenuItem key={t}>{t}</MenuItem>)}
          <MenuItem>L1L2</MenuItem>
        </MenuGroup>
        <MenuGroup $ml={267} $gap={22}>
          <MenuItem $c="#ff2020">交易未登录</MenuItem>
          <MenuItem $c="#ff2020">宝胜股份</MenuItem>
        </MenuGroup>
        <MenuGroup $ml={249} $gap={21}>
          {['功能', '版面', '公式', '选项', '帮助'].map(t => <MenuItem key={t}>{t}</MenuItem>)}
        </MenuGroup>
        <Clock><span>21:07:19</span><span style={{ fontSize: 18 }}>周二</span></Clock>
        <WinButtons>
          <ChevronLeft size={24} strokeWidth={3} />
          <Minus size={22} strokeWidth={3.5} />
          <svg width="20" height="20" viewBox="0 0 20 20" fill="none" stroke="#222" strokeWidth="2.6"><rect x="2" y="7" width="11" height="11" /><path d="M7 6V2H18V13H14" /></svg>
          <X size={24} strokeWidth={2.6} />
        </WinButtons>
      </TitleBar>
      <Body>
        <ChartColumn>
          <Toolbar>
            <Toggle><ToggleGlyph /></Toggle>
            <PeriodGroup>
              {['分时', '1分钟', '5分钟', '15分钟', '30分钟', '60分钟'].map(t => <Period key={t}>{t}</Period>)}
              <Period $on>日线</Period>
              {['周线', '月线', '多周期', '更多 〉'].map(t => <Period key={t}>{t}</Period>)}
            </PeriodGroup>
            {['复权', '叠加', '统计', '画线', 'F10', '标记', '-自选', '返回'].map(t => <ToolButton key={t}>{t}</ToolButton>)}
          </Toolbar>
          <Pane $h={734}>
            <MainChart />
            <Legend $top={2}>
              <LegendItem $w={131}>宝胜股份(日线)</LegendItem>
              <RoundMark><Chevron /></RoundMark>
              <LegendItem $w={81}>操盘主图</LegendItem>
              <LegendItem $w={160} $c="#ff1010">粗红线上强势: 0.00</LegendItem>
              <LegendItem $w={161} $c="#0a6cff">粗蓝线下弱势: 0.00</LegendItem>
              <LegendItem $w={159} $c="#e8e8e8">参照其它指标: 0.00</LegendItem>
              <LegendItem $w={166} $c="#ffff00">综合判断操作: 0.00</LegendItem>
              <LegendItem $w={169} $ml={-8} $c="#e81010">【操盘线】: 5.33<LegendArrow c="#33ffff" down /></LegendItem>
              <LegendItem $w={82} $c="#0a6cff">: 5.33<LegendArrow c="#33ffff" down /></LegendItem>
              <LegendItem $w={99} $c="#66cc00">压力1: 5.74</LegendItem>
              <LegendItem $w={98} $c="#a060e0">压力2: 5.98</LegendItem>
              <LegendItem $c="#10d8d8">支撑: 5.03</LegendItem>
              <LegendTail>
                <svg width="14" height="16" viewBox="0 0 14 16"><polygon points="7,1 13,8 7,15 1,8" fill="none" stroke="#808080" strokeWidth="1.2" /></svg>
                <ToggleGlyph />
              </LegendTail>
            </Legend>
          </Pane>
          <Pane $h={230}>
            <SubChartOne />
            <Legend $top={1}>
              <RoundMark><Chevron /></RoundMark>
              <LegendItem>龙腾四海&nbsp;&nbsp;XG100: 0.00</LegendItem>
            </Legend>
          </Pane>
          <Pane $h={252}>
            <SubChartTwo />
            <Legend $top={0}>
              <RoundMark><Chevron /></RoundMark>
              <LegendItem $w={81}>粘合必涨</LegendItem>
              <LegendItem $w={144} $c="#e8e800">AD: 441187.38<LegendArrow c="#ff2020" /></LegendItem>
              <LegendItem $w={142} $c="#e00000">AZ: 198638.17<LegendArrow c="#ff2020" /></LegendItem>
              <LegendItem $c="#6a6a6a">: 0.00</LegendItem>
            </Legend>
          </Pane>
          <AxisBar><TimeAxis /></AxisBar>
          <TabRow $h={26}>
            {TAB1.map(([t, w, c]) => <Tab key={t} $w={w} $c={c}>{t}</Tab>)}
            <TabSpacer />
            <Tab $w={46}>模板</Tab>
            <Tab $w={38}>+</Tab>
          </TabRow>
          <TabRow $h={27}>
            {TAB2.map(([t, w, c]) => <Tab key={t} $w={w} $c={c}>{t}</Tab>)}
            <TabSpacer />
          </TabRow>
        </ChartColumn>
        <QuotePanel>
          <Section $h={83} $rule>
            <NameRow><StockName>宝胜股份</StockName><StockCode>600973</StockCode></NameRow>
            <PriceRow>
              <span>5.18</span>
              <span>▲0.05</span>
              <RightText>0.97%</RightText>
            </PriceRow>
          </Section>
          <Section $h={136} $pt={1}>{ORDERS.map(r => <OrderRow key={r[0]} r={r} />)}</Section>
          <SplitRule />
          <Section $h={139} $rule>{BUYS.map(r => <OrderRow key={r[0]} r={r} />)}</Section>
          <Section $h={145} $rule>
            {STATS.map(r => (
              <StatRow key={r[0]}>
                <span />
                <Label style={{ gridColumn: 2, gridRow: 1 }}>{r[0]}</Label>
                <Num $c={r[2]} $right style={{ gridColumn: 2, gridRow: 1 }}>{r[1]}</Num>
                <Label style={{ gridColumn: 4 }}>{r[3]}</Label>
                <Num $c={r[5]} $right>{withUnit(r[4])}</Num>
              </StatRow>
            ))}
          </Section>
          <Section $h={93} $rule>
            {STATS2.map(r => (
              <StatRow key={r[0]}>
                <span />
                <Label style={{ gridColumn: 2, gridRow: 1 }}>{r[0]}</Label>
                <Num $c="#c0c0c0" $right style={{ gridColumn: 2, gridRow: 1 }}>{r[1]}</Num>
                <Label style={{ gridColumn: 4 }}>{r[2]}</Label>
                <Num $c="#c0c0c0" $right>{withUnit(r[3])}</Num>
              </StatRow>
            ))}
          </Section>
          <Section $h={120} $rule>
            {FLOWS.map(r => (
              <FlowRow key={r[0]}>
                <Label>{r[0]}</Label>
                <FlowBarCell>
                  <FlowBar $c={r[2]} $w={r[1]} />
                  <Num $c={r[2]} $right style={{ marginLeft: 'auto' }}>{r[3]}<Unit>万</Unit></Num>
                </FlowBarCell>
                <Num $c={r[2]} $right>{r[4]}</Num>
              </FlowRow>
            ))}
          </Section>
          <Section $h={608}>
            {TICKS.map((r, i) => (
              <TickRow key={i}>
                <Num $c="#c0c0c0">{r[0]}</Num>
                <Num>{r[1]}</Num>
                <Num $c={Number(r[2]) > 40 ? MAG : YEL} $right>{r[2]}<Unit>万</Unit></Num>
                <TickSide $c={r[3] === 'B' ? '#ff3232' : GRN}>{r[3]}</TickSide>
                <Num $c="#a8a8a8" $right>{r[4]}</Num>
              </TickRow>
            ))}
          </Section>
        </QuotePanel>
        <Rail>
          {RAIL.map((item, i) => item === 'rule' ? <RailRule key={i} />
            : item === 'gap' ? <RailGap key={i} />
            : <RailButton key={i} $on={item === '日'}>{item}</RailButton>)}
        </Rail>
      </Body>
      <StatusBar>
        <StatusLogo />
        <StatusCell $w={55} $big>上证</StatusCell>
        <StatusCell $w={102} $c="#f01010" $bold>3488.83</StatusCell>
        <StatusCell $w={75} $c="#f01010" $bold>26.52</StatusCell>
        <StatusCell $w={85} $c="#f01010" $bold>0.77%</StatusCell>
        <StatusCell $w={95} $bold>4126<Unit>亿</Unit></StatusCell>
        <StatusCell $w={54} $big>沪深</StatusCell>
        <StatusCell $w={102} $c="#f01010" $bold>4619.69</StatusCell>
        <StatusCell $w={75} $c="#f01010" $bold>38.04</StatusCell>
        <StatusCell $w={85} $c="#f01010" $bold>0.83%</StatusCell>
        <StatusCell $w={98} $bold>2604<Unit>亿</Unit></StatusCell>
        <StatusCell $w={52} $big>创业</StatusCell>
        <StatusCell $w={109} $c="#f01010" $bold>2885.79</StatusCell>
        <StatusCell $w={69} $c="#f01010" $bold>4.48</StatusCell>
        <StatusCell $w={85} $c="#f01010" $bold>0.16%</StatusCell>
        <StatusCell $w={97} $bold>2176<Unit>亿</Unit></StatusCell>
        <StatusSplit />
        <StatusCell $w={84} $big>总成交</StatusCell>
        <StatusCell $w={60} $bold>9</StatusCell>
      </StatusBar>
      <Watermark>
        <WmTitle>公式指标网</WmTitle>
        <svg width="80" height="80" viewBox="0 0 80 80" style={{ marginLeft: 20, flex: 'none' }}>
          <path d="M3 36 A37 37 0 0 1 77 36 L66 36 A26 26 0 0 0 14 36 Z" fill="#d8604c" />
          <path d="M77 44 A37 37 0 0 1 40 79 L40 68 A26 26 0 0 0 66 44 Z" fill="#e8c84c" />
          <defs><path id="wmArc" d="M7 46 A33 33 0 0 0 40 76" /></defs>
          <text fontSize="7" fill="#fff" fontWeight="700"><textPath href="#wmArc">www.9m8.cn</textPath></text>
          <circle cx="40" cy="6" r="5" fill="#e8c84c" stroke="#7faad9" strokeWidth="2" />
          <path d="M32 10 H48 L46 22 H54 V34 H47 V44 H56 V50 H47 V68 H40 V74 H33 V50 H24 V44 H33 V34 H26 V22 H34 Z" fill="#e8c84c" />
        </svg>
        <WmSite>www.9m8.cn</WmSite>
      </Watermark>
    </Page>
  );
}
